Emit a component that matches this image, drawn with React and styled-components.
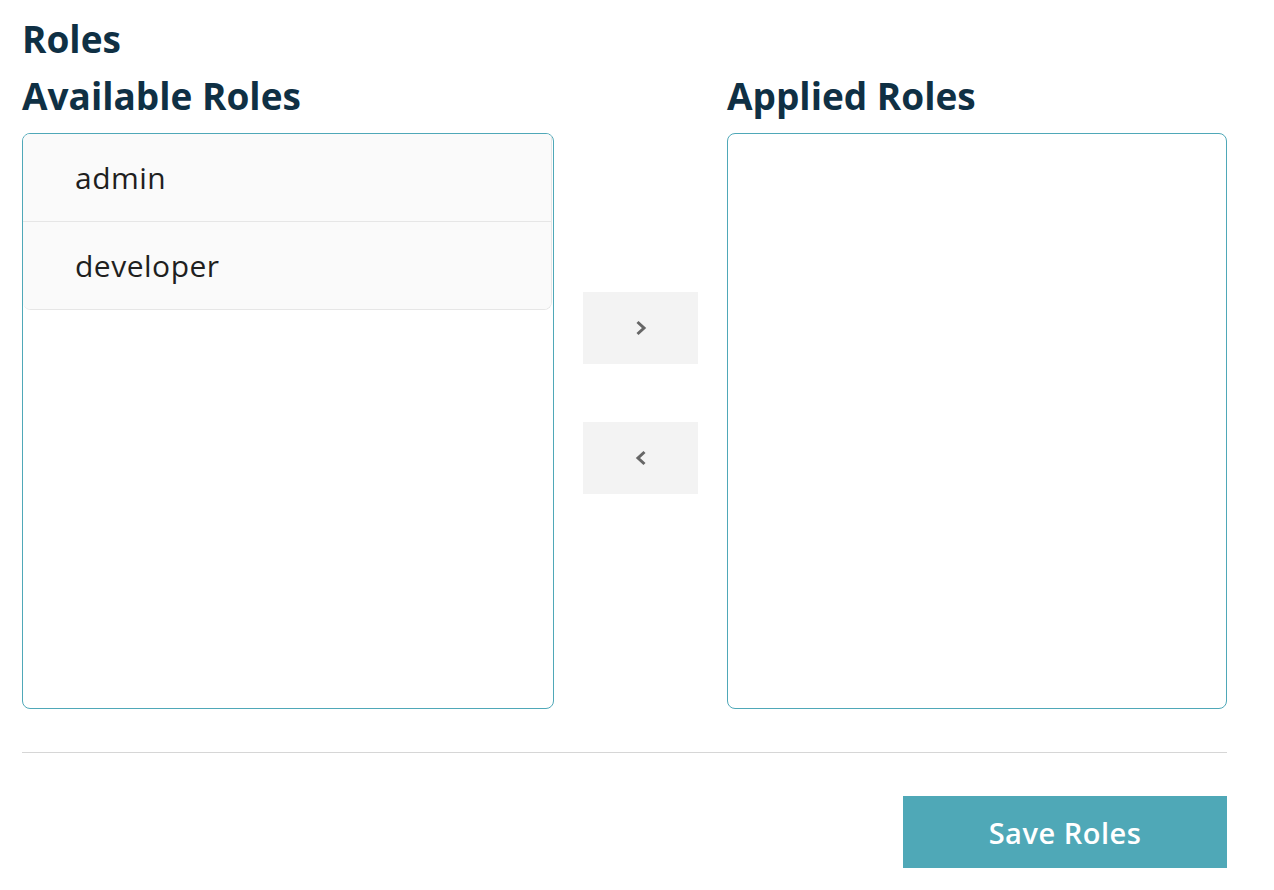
import React, { useState } from "react";
import styled, { createGlobalStyle } from "styled-components";

const GlobalStyle = createGlobalStyle`
  body {
    margin: 0;
    background: #fff;
    font-family: "Open Sans", "Noto Sans", sans-serif;
  }
`;

const Page = styled.div`
  width: 1205px;
  padding: 19px 22px 22px;
`;

const Title = styled.h1`
  margin: 0;
  font-size: 37px;
  line-height: 40px;
  font-weight: 700;
  color: #0f3044;
`;

const Columns = styled.div`
  display: grid;
  grid-template-columns: 532px 1fr 500px;
  margin-top: 17px;
`;

const Column = styled.div`
  display: flex;
  flex-direction: column;
`;

const ColumnTitle = styled.h2`
  margin: 0 0 17px;
  font-size: 37px;
  line-height: 40px;
  font-weight: 700;
  color: #0f3044;
`;

const ListBox = styled.div`
  height: 576px;
  box-sizing: border-box;
  border: 1px solid #4fa8b8;
  border-radius: 8px;
  overflow: hidden;
`;

const List = styled.ul`
  list-style: none;
  margin: 0 1px 0 0;
  padding: 0;
  border: 1px solid #e6e6e6;
  border-top: none;
  border-left: none;
  border-radius: 0 0 8px 8px;
  overflow: hidden;
`;

const Item = styled.li`
  display: flex;
  align-items: center;
  height: 87px;
  padding-left: 52px;
  background: ${({ $selected }) => ($selected ? "#eaf5f7" : "#fafafa")};
  border-top: ${({ $first }) => ($first ? "none" : "1px solid #e6e6e6")};
  font-size: 30px;
  letter-spacing: 0.5px;
  color: #1f1f1f;
  cursor: pointer;
`;

const Middle = styled.div`
  display: flex;
  flex-direction: column;
  align-items: center;
  justify-content: center;
  gap: 58px;
`;

const ArrowButton = styled.button`
  width: 115px;
  height: 72px;
  border: none;
  background: #f3f3f3;
  display: flex;
  align-items: center;
  justify-content: center;
  cursor: pointer;
  padding: 0;
`;

const Divider = styled.hr`
  margin: 43px 0 0;
  border: none;
  border-top: 1px solid #d6d6d6;
`;

const Footer = styled.div`
  display: flex;
  justify-content: flex-end;
  margin-top: 43px;
`;

const SaveButton = styled.button`
  width: 324px;
  height: 72px;
  border: none;
  background: #4fa8b7;
  color: #fff;
  font-family: inherit;
  font-size: 29px;
  font-weight: 600;
  letter-spacing: 0.5px;
  cursor: pointer;
`;

const Chevron = ({ dir }) => (
  <svg width="12" height="16" viewBox="0 0 12 16" fill="none">
    <polyline
      points={dir === "right" ? "2.5,2 9,8 2.5,14" : "9.5,2 3,8 9.5,14"}
      stroke="#666"
      strokeWidth="3"
      strokeLinecap="butt"
      strokeLinejoin="miter"
    />
  </svg>
);

export default function App() {
  const [available, setAvailable] = useState(["admin", "developer"]);
  const [applied, setApplied] = useState([]);

  return (
    <>
      <GlobalStyle />
      <Page>
        <Title>Roles</Title>
        <Columns>
          <Column>
            <ColumnTitle>Available Roles</ColumnTitle>
            <ListBox>
              <List>
                {available.map((r, i) => (
                  <Item key={r} $first={i === 0}>
                    {r}
                  </Item>
                ))}
              </List>
            </ListBox>
          </Column>
          <Middle>
            <ArrowButton
              aria-label="Add role"
              onClick={() => {
                if (!available.length) return;
                setApplied([...applied, available[0]]);
                setAvailable(available.slice(1));
              }}
            >
              <Chevron dir="right" />
            </ArrowButton>
            <ArrowButton
              aria-label="Remove role"
              onClick={() => {
                if (!applied.length) return;
                setAvailable([...available, applied[applied.length - 1]]);
                setApplied(applied.slice(0, -1));
              }}
            >
              <Chevron dir="left" />
            </ArrowButton>
          </Middle>
          <Column>
            <ColumnTitle>Applied Roles</ColumnTitle>
            <ListBox>
              {applied.length > 0 && (
                <List>
                  {applied.map((r, i) => (
                    <Item key={r} $first={i === 0}>
                      {r}
                    </Item>
                  ))}
                </List>
              )}
            </ListBox>
          </Column>
        </Columns>
        <Divider />
        <Footer>
          <SaveButton>Save Roles</SaveButton>
        </Footer>
      </Page>
    </>
  );
}
